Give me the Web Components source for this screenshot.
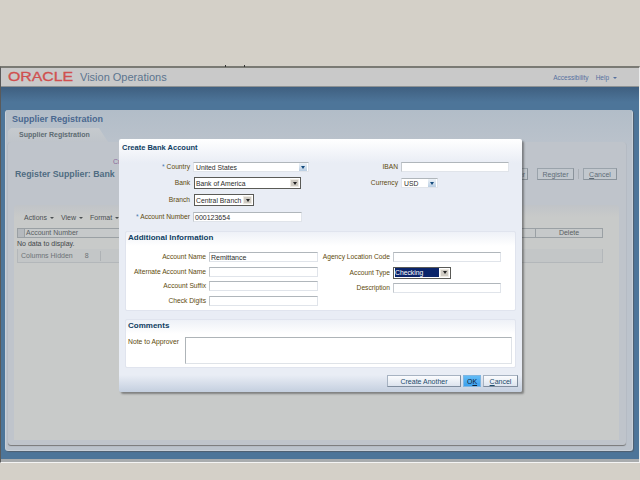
<!DOCTYPE html>
<html><head><meta charset="utf-8"><title>Create Bank Account</title>
<style>
html,body{margin:0;height:480px;overflow:hidden;background:#d4d0c8;font-family:"Liberation Sans",Arial,sans-serif;font-size:7px}
</style></head><body>
<oa-window>
  <oa-header></oa-header>
  <oa-workspace></oa-workspace>
</oa-window>
<oa-dialog heading="Create Bank Account">
  <div slot="left">
    <oa-field required label="Country" lw="71"><oa-select kind="combo" w="116" value="United States"></oa-select></oa-field>
    <oa-field label="Bank" lw="71"><oa-select w="107" value="Bank of America" style="margin-left:1px"></oa-select></oa-field>
    <oa-field label="Branch" lw="71"><oa-select w="60" value="Central Branch" style="margin-left:1px"></oa-select></oa-field>
    <oa-field required label="Account Number" lw="71"><oa-input w="109" value="000123654"></oa-input></oa-field>
  </div>
  <div slot="right">
    <oa-field label="IBAN" lw="46"><oa-input w="108"></oa-input></oa-field>
    <oa-field label="Currency" lw="46" style="margin-top:1px"><oa-select kind="combo" w="37" value="USD"></oa-select></oa-field>
  </div>
  <oa-section slot="info" heading="Additional Information" style="height:78px">
    <oa-field label="Account Name" lw="80"><oa-input w="109" value="Remittance"></oa-input></oa-field>
    <oa-field label="Agency Location Code" lw="72"><oa-input w="108"></oa-input></oa-field>
    <oa-field label="Alternate Account Name" lw="80"><oa-input w="109"></oa-input></oa-field>
    <oa-field label="Account Type" lw="72"><oa-select w="58" selected value="Checking"></oa-select></oa-field>
    <oa-field label="Account Suffix" lw="80"><oa-input w="109"></oa-input></oa-field>
    <oa-field label="Description" lw="72" style="margin-top:2px"><oa-input w="108"></oa-input></oa-field>
    <oa-field label="Check Digits" lw="80"><oa-input w="109"></oa-input></oa-field>
  </oa-section>
  <oa-comments slot="comments"></oa-comments>
  <oa-button slot="actions" style="width:74px">Create Another</oa-button>
  <oa-button slot="actions" primary style="width:18px">O<u>K</u></oa-button>
  <oa-button slot="actions" style="width:35px"><u>C</u>ancel</oa-button>
</oa-dialog>
<script>
function def(name,html,init){
  customElements.define(name,class extends HTMLElement{
    constructor(){super();this.attachShadow({mode:'open'}).innerHTML=html;}
    connectedCallback(){if(init)init(this,this.shadowRoot);}
  });
}
def('oa-window',`<style>
:host{display:block;position:relative;margin-top:66px;height:397px;background:#4e769c;border-top:2px solid #7a7a74;box-sizing:border-box;border-left:1px solid #5a5a5a;border-right:1px solid #eee;border-bottom:1px solid #f4f4f4}
:host::before{content:"";position:absolute;left:224px;top:-3px;width:1px;height:2px;background:#333;box-shadow:19px 0 #333}
.wrap{display:flex;flex-direction:column;height:100%;background:linear-gradient(#3f5f80 19px,#4d7599 34px,#4d7599 100%)}
.foot{height:3px;background:#a9acae;margin-top:auto;flex:none}
</style><div class="wrap"><slot></slot><div class="foot"></div></div>`);
def('oa-header',`<style>
:host{display:flex;align-items:center;height:18px;flex:none;background:#c9c9c9;border-bottom:1px solid #8d9294;color:#5b7390;padding-left:7px}
.logo{display:inline-block;width:64px;overflow:visible;white-space:nowrap}
.logo span{display:inline-block;font-size:12px;font-weight:normal;-webkit-text-stroke:.3px #d0504f;color:#d0504f;transform:scaleX(1.32);transform-origin:0 50%;line-height:11px}
.app{font-size:11px;margin-left:8px;color:#5c758f}
.links{margin-left:auto;margin-right:22px;display:flex;gap:7px;font-size:6.5px;color:#56709f;align-items:center}
.tri{display:inline-block;border:2px solid transparent;border-top:2.5px solid #56709f;border-bottom:0;margin-left:4px;vertical-align:1px}
</style><span class="logo"><span>ORACLE</span></span><span class="app">Vision Operations</span>
<div class="links"><span>Accessibility</span><span>Help<i class="tri"></i></span></div>`);
def('oa-workspace',`<style>
:host{display:block;margin:23px 6px 0 4px;height:341px;box-sizing:border-box;border-radius:3px;background:linear-gradient(#b2bdc8,#bcc3cc 40px);box-shadow:1px 1px 1px #50606f;border:1px solid #c9d0d8;border-top:0;color:#5c6a74;position:relative}
.title{font-size:9px;font-weight:bold;color:#4a6890;padding:4px 6px 0;height:14px;box-sizing:border-box;line-height:10px}
.tab{width:100px;height:14px;margin-left:2px;background:linear-gradient(#c6cace,#bfc4ca);clip-path:polygon(3px 0,91px 0,100px 100%,0 100%,0 3px);font-size:7px;font-weight:bold;padding:3px 0 0 11px;color:#5d6b72;box-sizing:border-box;line-height:8px;margin-top:4px}
.inner{margin:0 6px 0 2px;height:303px;box-sizing:border-box;padding:0 7px 5px 6px;background:#bfc4cb;border-radius:3px;box-shadow:0 1px 1px #777;border:0;position:relative;display:flex;flex-direction:column}
.crumb{height:22px;padding:16px 0 0 99px;color:#8a6a9c;box-sizing:border-box;line-height:8px;flex:none}
.bar{display:flex;align-items:center;height:12px;margin:4px 2px 0 0;flex:none}
h1{margin:0 0 0 1px;font-size:8.8px;color:#4f6c82;font-weight:bold;white-space:nowrap}
.btns{margin-left:auto;display:flex;gap:9px;align-items:center}
.btn{height:12px;box-sizing:border-box;border:1px solid #9aa3ab;border-right-color:#8a939b;border-bottom-color:#8a939b;background:#c2c8ce;display:flex;align-items:center;justify-content:center;color:#5f6d78;font-size:7px}
.sep{width:1px;height:10px;background:#aab0b6;margin:0 -5px}
.card{flex:1;margin-top:25px;background:linear-gradient(#c0c4c8,#c8cac9 12px);border-radius:3px 3px 0 0;padding:6px 16px 0 3px;color:#5a5f62;display:flex;flex-direction:column}
.tools{display:flex;gap:7px;height:13px;align-items:center;padding-left:7px;color:#4a4f52;flex:none}
.tools i{display:inline-block;border:2px solid transparent;border-top:2.5px solid #4a4f52;border-bottom:0;margin-left:3px;vertical-align:1px}
.head{display:flex;height:10px;border:1px solid #9aa0a4;border-left:0;box-sizing:border-box;background:#c6c9ca;align-items:center;margin-top:4px;flex:none;line-height:8px}
.sel{width:6px;height:100%;background:#b5b9bd;border-right:1px solid #9aa0a4;margin-right:1px;border-left:1px solid #9aa0a4}
.del{margin-left:auto;width:66px;border-left:1px solid #9aa0a4;text-align:center;height:100%}
.nodata{height:11px;line-height:11px;color:#3f4548;flex:none}
.hidden{display:flex;height:14px;align-items:center;border-left:1px solid #b3b7ba;border-right:1px solid #b3b7ba;border-bottom:1px solid #b3b7ba;background:#c3c6c7;padding-left:3px;color:#6c7276;box-sizing:border-box;flex:none}
.hidden b{font-weight:normal;margin-left:12px;width:15px;border-right:1px solid #aeb2b5;height:10px;line-height:10px}
</style>
<div class="title">Supplier Registration</div>
<div class="tab">Supplier Registration</div>
<div class="inner">
  <div class="crumb">Cr</div>
  <div class="bar"><h1>Register Supplier: Bank</h1>
    <div class="btns"><div class="btn" style="width:44px;justify-content:flex-end;padding-right:2px">Later</div><div class="btn" style="width:37px">Register</div><div class="sep"></div><div class="btn" style="width:34px"><span><u>C</u>ancel</span></div></div>
  </div>
  <div class="card">
    <div class="tools"><span>Actions<i></i></span><span>View<i></i></span><span>Format<i></i></span></div>
    <div class="head"><div class="sel"></div><span>Account Number</span><div class="del">Delete</div></div>
    <div class="nodata">No data to display.</div>
    <div class="hidden"><span>Columns Hidden</span><b>8</b></div>
  </div>
</div>`);
def('oa-dialog',`<style>
:host{display:flex;flex-direction:column;position:absolute;left:119px;top:139px;width:403px;height:253px;box-sizing:border-box;border-radius:2px;color:#5e4a0c;background:linear-gradient(#fff 0,#e9edf5 24px,#e9edf5 236px,#c4cfdf 100%);box-shadow:2px 2px 2px rgba(40,40,40,.45)}
.t{height:23px;flex:none;box-sizing:border-box;padding:4px 0 0 3px;font-size:7.5px;font-weight:bold;color:#0f3d62;line-height:9px}
.top{height:69px;display:flex;flex:none}
.l{width:233px}.r{flex:1}
::slotted(div){display:grid;grid-template-rows:15px 17px 18px 10px;align-items:start}
.s{margin:0 6px;flex:none}
.s2{margin:8px 6px 0;flex:none}
.a{display:flex;justify-content:flex-end;gap:2px;margin:7px 4px 0 0;flex:none}
</style>
<div class="t" id="t"></div>
<div class="top"><div class="l"><slot name="left"></slot></div><div class="r"><slot name="right"></slot></div></div>
<div class="s"><slot name="info"></slot></div>
<div class="s2"><slot name="comments"></slot></div>
<div class="a"><slot name="actions"></slot></div>`,(h,s)=>{s.getElementById('t').textContent=h.getAttribute('heading')});
def('oa-section',`<style>
:host{display:block;box-sizing:content-box;border:1px solid #e0e4ee;background:linear-gradient(#eef1f7,#fff 14px);border-radius:2px}
h2{margin:0;height:20px;box-sizing:border-box;padding:1px 0 0 2px;font-size:8px;line-height:10px;color:#0f3d62;font-weight:bold}
.g{display:grid;grid-template-columns:192px 1fr;grid-auto-rows:14.67px;align-items:start}
</style><h2 id="h"></h2><div class="g"><slot></slot></div>`,(h,s)=>{s.getElementById('h').textContent=h.getAttribute('heading')});
def('oa-comments',`<style>
:host{display:block;height:47px;border:1px solid #e0e4ee;background:linear-gradient(#eef1f7,#fff 14px);border-radius:2px}
h2{margin:0;height:17px;box-sizing:border-box;padding:1px 0 0 2px;font-size:8px;line-height:10px;color:#0f3d62;font-weight:bold}
.b{display:flex}
.n{width:59px;padding-left:2px;font-size:6.8px;line-height:8px;padding-top:1px;box-sizing:border-box;flex:none}
.ta{width:327px;height:27px;box-sizing:border-box;background:#fff;border:1px solid #dfe3e8;border-top-color:#aeb4b8;border-left-color:#aeb4b8}
</style><h2>Comments</h2><div class="b"><div class="n">Note to Approver</div><div class="ta"></div></div>`);
def('oa-field',`<style>
:host{display:flex;align-items:center;gap:3px}
.l{text-align:right;white-space:nowrap;line-height:8px;flex:none;font-size:6.7px}
.r{color:#4a7cb0}
</style><div class="l" id="l"></div><slot></slot>`,(h,s)=>{const l=s.getElementById('l');l.style.width=h.getAttribute('lw')+'px';
 l.innerHTML=(h.hasAttribute('required')?'<span class="r">* </span>':'');l.append(h.getAttribute('label'));});
def('oa-input',`<style>
:host{display:block;height:10px;box-sizing:border-box;background:#fff;border:1px solid #e0e4ea;border-top-color:#b0b6bb;border-left-color:#c4c9ce;color:#2c2c2c;padding-left:1px;line-height:9px;white-space:nowrap;overflow:hidden}
</style><span id="v"></span>`,(h,s)=>{h.style.width=h.getAttribute('w')+'px';s.getElementById('v').textContent=h.getAttribute('value')||''});
def('oa-select',`<style>
:host{display:flex;align-items:center;box-sizing:border-box;height:12px;background:#fff;border:1px solid #5a5a56;color:#2c2c2c;white-space:nowrap;padding:1px;overflow:hidden;font-size:6.8px}
:host([kind=combo]){height:10px;border:1px solid #e0e4ea;border-top-color:#b0b6bb;padding:0}
.v{flex:1;padding-left:0;line-height:9px;height:9px;overflow:visible}
:host([kind=combo]) .v{padding-left:2px}
:host([selected]) .v{background:#0a246a;color:#fff;margin-right:1px}
.a{width:9px;height:8px;background:#cfcbc3;border:0;flex:none;display:flex;align-items:center;justify-content:center;box-shadow:inset 0 0 0 1px #eeeae2}
:host([kind=combo]) .a{height:8px;width:8px;background:linear-gradient(#eef3f8,#b8cde2);box-shadow:none;margin-right:1px}
.a i{border:2.5px solid transparent;border-top:3px solid #222;border-bottom:0}
:host([kind=combo]) .a i{border-top-color:#134a7c}
</style><div class="v" id="v"></div><div class="a"><i></i></div>`,(h,s)=>{h.style.width=h.getAttribute('w')+'px';s.getElementById('v').textContent=h.getAttribute('value')||''});
def('oa-button',`<style>
:host{display:flex;align-items:center;justify-content:center;height:12px;box-sizing:border-box;border:1px solid #a7b3c2;border-right-color:#7f8d9e;border-bottom-color:#7f8d9e;background:linear-gradient(#fbfcfe,#dde4ee);color:#1c4a6b;white-space:nowrap}
:host([primary]){background:linear-gradient(#63bcf6,#3a9fee);border-color:#7fb6e2;color:#123}
</style><span><slot></slot></span>`);
</script>
</body></html>
